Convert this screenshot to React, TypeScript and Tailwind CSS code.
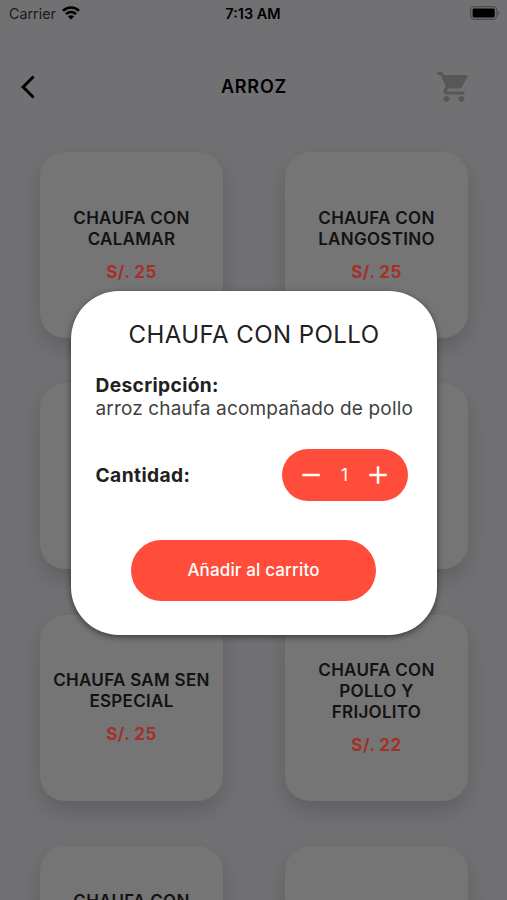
import { useState } from "react";
import { MdAdd, MdArrowBackIos, MdRemove, MdShoppingCart } from "react-icons/md";

type Dish = {
  id: number;
  name?: string[];
  price?: number;
};

const dishes: Dish[] = [
  { id: 1, name: ["CHAUFA CON", "CALAMAR"], price: 25 },
  { id: 2, name: ["CHAUFA CON", "LANGOSTINO"], price: 25 },
  { id: 3 },
  { id: 4 },
  { id: 5, name: ["CHAUFA SAM SEN", "ESPECIAL"], price: 25 },
  { id: 6, name: ["CHAUFA CON", "POLLO Y", "FRIJOLITO"], price: 22 },
  { id: 7, name: ["CHAUFA CON", "POLLO Y", "CHANCHO"], price: 22 },
  { id: 8 },
];

export default function App() {
  const [quantity, setQuantity] = useState(1);

  return (
    // The page behind the dialog uses its dimmed colours
    <div className="relative h-[900px] w-[507px] overflow-hidden bg-[#717174] font-['Inter',sans-serif] text-[#212121]">
      <StatusBar />

      {/* Header */}
      <header className="flex h-[117px] items-center justify-between pr-[35px] pl-[21px] text-black">
        <div className="w-[51px]">
          <MdArrowBackIos size={28} />
        </div>
        <h1 className="text-[18px] font-semibold tracking-[0.8px]">ARROZ</h1>
        <MdShoppingCart size={36} className="text-[#575756]" />
      </header>

      {/* Dishes */}
      <main className="grid grid-cols-[183px_183px] gap-x-[62px] gap-y-[45.4px] pt-[7px] pl-10">
        {dishes.map((dish) => (
          <DishCard key={dish.id} dish={dish} />
        ))}
      </main>

      {/* Dialog */}
      <div className="absolute inset-0 flex justify-center pt-[291px]">
        <section className="flex h-[344px] w-[366px] flex-col rounded-[48px] bg-white px-[25px] shadow-[0_2px_6px_rgba(0,0,0,0.5)]">
          <h2 className="mt-[28px] pl-px text-center text-[24px] leading-[32px] tracking-[0.45px]">
            CHAUFA CON POLLO
          </h2>
          <p className="mt-[23px] text-[19.2px] leading-[23px] font-bold tracking-[0.35px]">
            Descripción:
          </p>
          <p className="text-[19px] leading-[23px] tracking-[0.15px] whitespace-nowrap text-[#424242]">
            arroz chaufa acompañado de pollo
          </p>

          <div className="mt-[29px] flex items-center justify-between pr-1">
            <span className="text-[19.2px] font-bold tracking-[0.4px]">Cantidad:</span>
            <div className="flex h-[52px] w-[126px] items-center justify-between rounded-full bg-[#ff4c3b] px-[14px] text-white">
              <button onClick={() => setQuantity(Math.max(1, quantity - 1))}>
                <MdRemove size={30} />
              </button>
              <span className="pt-px text-[17px]">{quantity}</span>
              <button onClick={() => setQuantity(quantity + 1)}>
                <MdAdd size={30} />
              </button>
            </div>
          </div>

          <button className="mt-[39px] h-[61px] w-[245px] self-center rounded-full bg-[#ff4c3b] text-[17px] font-medium tracking-[0.15px] text-white">
            Añadir al carrito
          </button>
        </section>
      </div>
    </div>
  );
}

/* ── iOS status bar ── */
function StatusBar() {
  return (
    <div className="flex h-7 items-center justify-between pr-[7px] pl-[9px] text-[14.5px] text-black">
      <div className="flex w-[86px] items-center gap-[6px]">
        <span className="text-[14.3px] text-[#1a1a1a]">Carrier</span>
        <svg width="18" height="14" viewBox="0 0 18 14" fill="none" stroke="black" strokeWidth="2.6" className="-mt-0.5">
          <path d="M1 4.8C5.4 .4 12.6 .4 17 4.8" />
          <path d="M4 8.1c2.8-2.8 7.2-2.8 10 0" />
          <path d="M9 13.4 5.9 10.4c1.6-1.6 4.6-1.6 6.2 0z" fill="black" stroke="none" />
        </svg>
      </div>
      <span className="pr-[3px] font-semibold">7:13 AM</span>
      <div className="flex w-[86px] justify-end">
        <svg width="30" height="14" viewBox="0 0 30 14" className="-mt-0.5">
          <rect x=".6" y=".6" width="26.2" height="12.8" rx="3.8" fill="none" stroke="#4c4c4e" strokeWidth="1.2" />
          <rect x="2.6" y="2.5" width="22.2" height="9" rx="1.4" fill="black" />
          <path d="M28 4.8c1.9.9 1.9 3.5 0 4.4z" fill="#4c4c4e" />
        </svg>
      </div>
    </div>
  );
}

function DishCard({ dish }: { dish: Dish }) {
  return (
    <article className="flex h-[186px] flex-col items-center justify-center rounded-[25px] bg-[#757575] text-center font-semibold text-[#121212] shadow-[0_10px_22px_rgba(0,0,0,0.16)]">
      {dish.name && (
        <h3 className="text-[17px] leading-[21px] tracking-[0.3px]">
          {dish.name.map((line) => (
            <span key={line} className="block whitespace-nowrap">
              {line}
            </span>
          ))}
        </h3>
      )}
      {dish.price && (
        <p className="mt-3 text-[17px] leading-[21px] font-bold tracking-[0.45px] text-[#a5302a]">
          S/. {dish.price}
        </p>
      )}
    </article>
  );
}
